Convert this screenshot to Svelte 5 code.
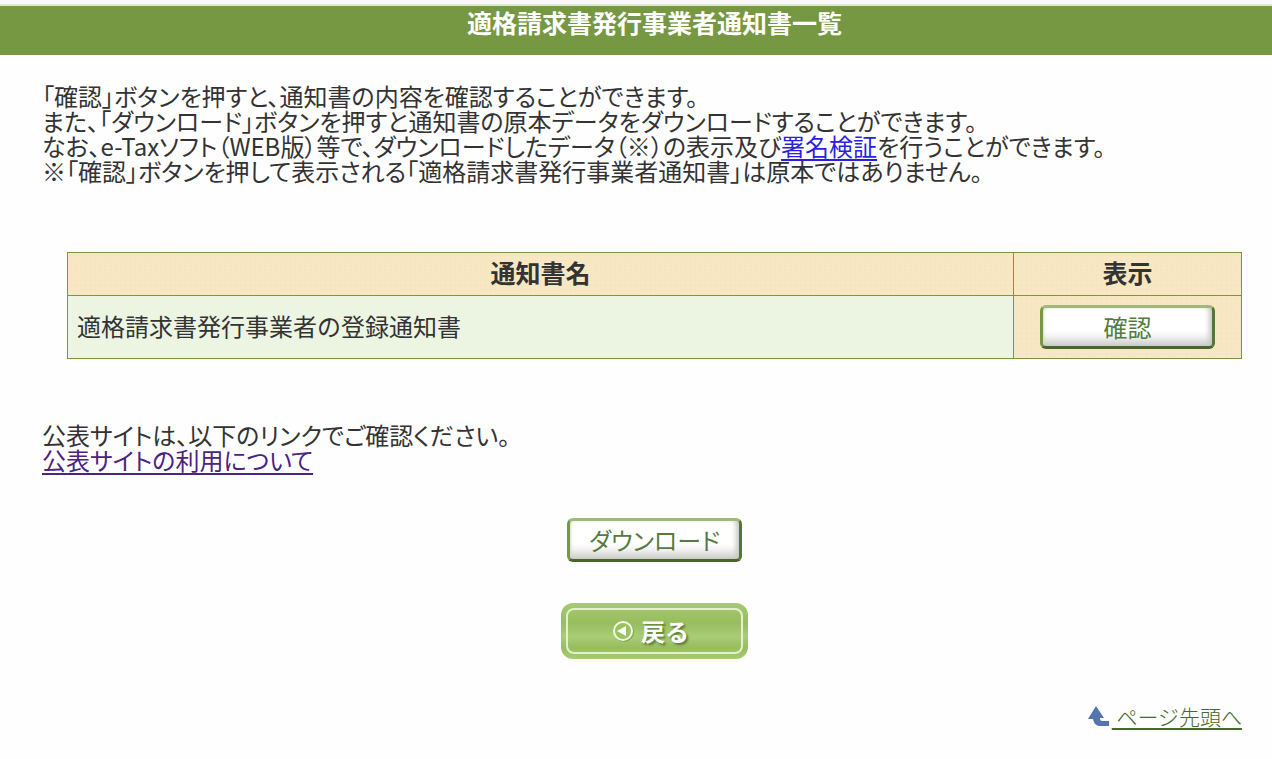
<script>
  const notices = [{ id: 1, name: '適格請求書発行事業者の登録通知書' }];
</script>

<header class="title-bar" id="top">
  <h1>適格請求書発行事業者通知書一覧</h1>
</header>

<main>
  <p class="text intro">
    「確認」ボタンを押すと、通知書の内容を確認することができます。<br />
    また、「ダウンロード」ボタンを押すと通知書の原本データをダウンロードすることができます。<br />
    なお、e-Taxソフト（WEB版）等で、ダウンロードしたデータ（※）の表示及び<a href="#verify">署名検証</a>を行うことができます。<br />
    ※「確認」ボタンを押して表示される「適格請求書発行事業者通知書」は原本ではありません。
  </p>

  <table>
    <thead>
      <tr>
        <th scope="col">通知書名</th>
        <th scope="col" class="action">表示</th>
      </tr>
    </thead>
    <tbody>
      {#each notices as notice (notice.id)}
        <tr>
          <td class="name">{notice.name}</td>
          <td class="action"><button type="button" class="raised">確認</button></td>
        </tr>
      {/each}
    </tbody>
  </table>

  <p class="text site">
    公表サイトは、以下のリンクでご確認ください。<br />
    <a class="visited" href="#site">公表サイトの利用について</a>
  </p>

  <div class="buttons">
    <button type="button" class="raised">ダウンロード</button>
    <button type="button" class="back">
      <span class="frame">
        <svg width="22" height="22" viewBox="0 0 22 22" aria-hidden="true">
          <circle cx="12" cy="12" r="9" fill="none" stroke="#6f8f45" stroke-width="2" opacity="0.6" />
          <circle cx="11" cy="11" r="9" fill="#9bc163" stroke="#f4f9ea" stroke-width="2" />
          <path d="M5 11 L14 6 V16 Z" fill="#fff" />
        </svg>
        戻る
      </span>
    </button>
  </div>

  <div class="page-top">
    <svg width="21" height="21" viewBox="0 0 21 21" aria-hidden="true">
      <path d="M8 0 L16 12 H12 Q12 15 14 15 H21 V20 H11 Q6 19 5 13 H0 Z" fill="#5475ad" />
    </svg>
    <a href="#top">&nbsp;ページ先頭へ</a>
  </div>
</main>

<style>
  :global(body) {
    margin: 0;
    background: #fefefe;
    color: #333;
    font-family: 'Noto Sans CJK JP', sans-serif;
    font-size: 24px;
  }

  .title-bar {
    box-sizing: border-box;
    min-height: 55px;
    padding: 2px 0 0 37px;
    border-top: 4px solid #f9f9f2;
    background: #769843;
    box-shadow: inset 0 2px #e0e6d6;
    color: #fff;
    text-align: center;
  }

  h1 {
    margin: 0;
    font-size: 25px;
    line-height: 32px;
    font-weight: 700;
  }

  main {
    padding: 28px 30px 24px 42px;
  }

  p {
    margin: 0;
  }

  .text {
    line-height: 25px;
    font-feature-settings: 'palt';
  }

  a {
    color: #2a1fe0;
    text-decoration-thickness: 2px;
    text-underline-offset: 3px;
  }

  a.visited {
    color: #4a2383;
  }

  table {
    width: calc(100% - 25px);
    margin: 69px 0 63px 25px;
    border-collapse: collapse;
  }

  th,
  td {
    border: 1px solid #769843;
    padding: 0 9px;
    text-align: left;
  }

  th {
    height: 38px;
    padding-bottom: 4px;
    background: #f7e8c3;
    font-size: 25px;
    line-height: 34px;
    text-align: center;
  }

  td {
    height: 62px;
    background: #ecf5e2;
  }

  .name {
    height: 58px;
    padding-bottom: 4px;
  }

  .action {
    width: 209px;
    background: #f7e8c3;
    text-align: center;
  }

  th,
  .action {
    background-image: radial-gradient(circle at 2px 2px, #f6e2bd 1px, transparent 1px);
    background-size: 5px 5px;
  }

  button {
    font-family: inherit;
    cursor: pointer;
  }

  .raised {
    box-sizing: border-box;
    display: inline-flex;
    align-items: center;
    justify-content: center;
    width: 175px;
    height: 44px;
    padding: 0;
    border: 3px solid;
    border-color: #9fb979 #557636 #48652c #769843;
    border-radius: 6px;
    background: linear-gradient(#fff 60%, #f2f2f2 75%, #c9ccc8);
    box-shadow: inset -5px 0 5px -2px #c5c9c3, inset 3px 0 3px -2px #d5d8d3;
    color: #557b3e;
    font-size: 24px;
    line-height: 36px;
    vertical-align: middle;
    font-feature-settings: 'palt';
  }

  .buttons {
    display: flex;
    flex-direction: column;
    align-items: center;
    gap: 41px;
    margin: 46px 0 39px 25px;
  }

  .back {
    box-sizing: border-box;
    width: 187px;
    height: 56px;
    padding: 5px;
    border: 0;
    border-radius: 12px;
    background: linear-gradient(#a8cb72, #97bd5d 35%, #a9cd74 60%, #97bd5d 80%, #a8cb72);
    color: #fff;
    font-size: 24px;
    font-weight: 700;
  }

  .frame {
    box-sizing: border-box;
    display: flex;
    align-items: center;
    justify-content: center;
    gap: 7px;
    height: 100%;
    padding-right: 8px;
    border: 2px solid #e3f0c9;
    border-radius: 8px;
    line-height: 36px;
    text-shadow: 2px 2px 2px #5f7f38;
  }

  .page-top {
    display: flex;
    justify-content: flex-end;
    align-items: center;
    gap: 3px;
    font-size: 21px;
    line-height: 36px;
  }

  .page-top a {
    color: #47682f;
    font-weight: 300;
  }
</style>
